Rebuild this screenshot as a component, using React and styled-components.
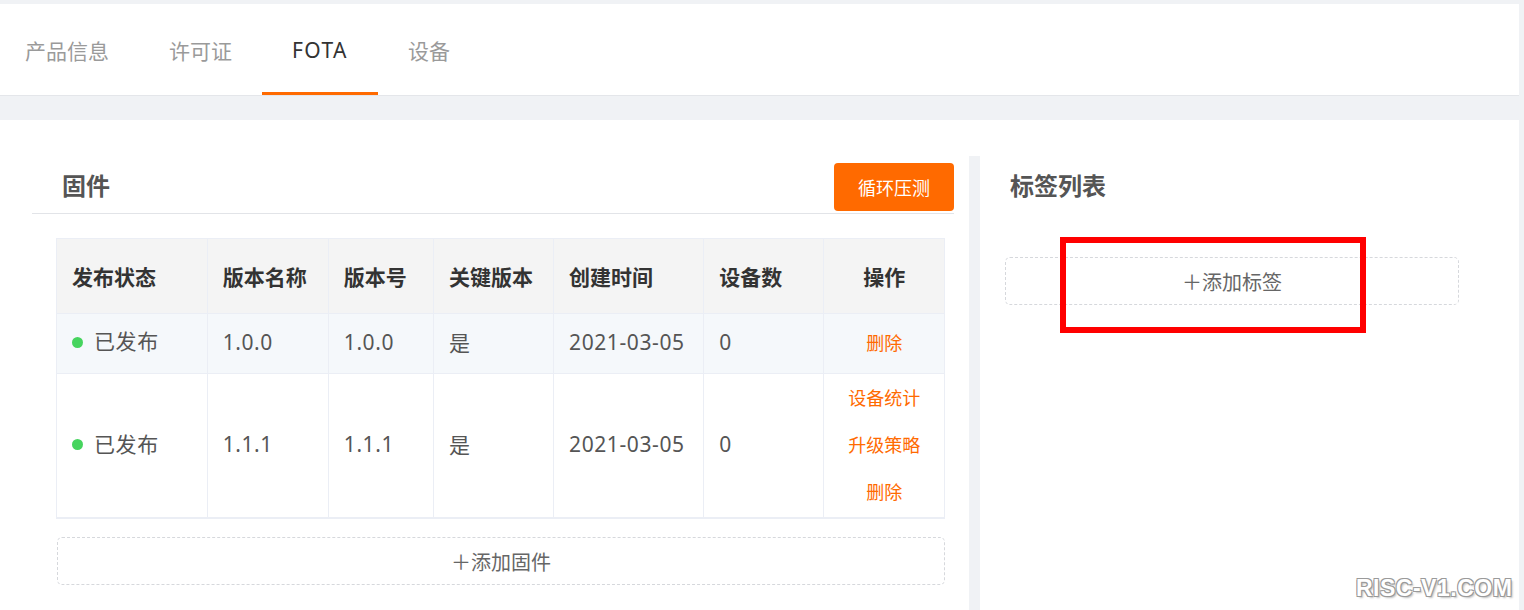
import styled, { createGlobalStyle } from "styled-components";

const GlobalStyle = createGlobalStyle`
  html, body {
    margin: 0;
    padding: 0;
    background: #f0f2f5;
    font-family: "Noto Sans", "Noto Sans CJK SC", sans-serif;
  }
  * { box-sizing: border-box; }
`;

const ORANGE = "#ff6a00";
const LINE = "#ebeef5";

const Page = styled.div`
  position: relative;
  width: 1519px;
  height: 610px;
  padding-top: 4px;
  overflow: hidden;
`;

const TabBar = styled.div`
  display: flex;
  height: 92px;
  background: #fff;
  border-bottom: 1px solid #e4e6ea;
  margin-bottom: 24px;
`;

const Tab = styled.div`
  position: relative;
  display: flex;
  align-items: center;
  padding: 0 30px;
  font-size: 21px;
  letter-spacing: ${(p) => (p.$latin ? "1.4px" : "0")};
  color: ${(p) => (p.$active ? "#333" : "#9a9a9a")};
  &:first-child { padding-left: 25px; }
  &::after {
    content: "";
    display: ${(p) => (p.$active ? "block" : "none")};
    position: absolute;
    left: 0;
    right: 0;
    bottom: 0;
    height: 3px;
    background: ${ORANGE};
  }
`;

const Content = styled.div`
  background: #fff;
  padding-top: 36px;
  height: 490px;
`;

const Columns = styled.div`
  display: flex;
  height: 100%;
`;

const FirmwarePanel = styled.section`
  width: 969px;
  flex-shrink: 0;
`;

const TagPanel = styled.section`
  position: relative;
  flex: 1;
  border-left: 11px solid #f0f2f5;
`;

const PanelHeader = styled.div`
  display: flex;
  align-items: center;
  justify-content: space-between;
  height: 58px;
  padding: 7px 0 2px 30px;
  margin: ${(p) => (p.$line ? "0 15px 0 32px" : "0")};
  border-bottom: ${(p) => (p.$line ? "1px solid #e2e4e8" : "none")};
`;

const Title = styled.h2`
  margin: -6px 0 0;
  font-size: 24px;
  font-weight: 700;
  color: #555;
`;

const PrimaryButton = styled.button`
  width: 120px;
  height: 48px;
  border: none;
  border-radius: 4px;
  background: ${ORANGE};
  color: #fff;
  font-family: inherit;
  font-size: 18px;
`;

const TableWrap = styled.div`
  margin: 24px 24px 0 56px;
  border: 1px solid ${LINE};
  border-bottom-width: 2px;
`;

const Table = styled.table`
  width: 100%;
  border-collapse: collapse;
  table-layout: fixed;
`;

const Th = styled.th`
  height: 74px;
  padding: 0 15px;
  background: #f4f4f4;
  border-right: 1px solid ${LINE};
  font-size: 21px;
  font-weight: 700;
  color: #333;
  text-align: ${(p) => (p.$center ? "center" : "left")};
  &:last-child { border-right: none; }
`;

const Row = styled.tr`
  background: ${(p) => (p.$highlight ? "#f5f8fb" : "#fff")};
  border-top: 1px solid ${LINE};
`;

const Td = styled.td`
  height: ${(p) => p.$h}px;
  padding: ${(p) => (p.$center ? "1px 0" : "0 15px 2px")};
  border-right: 1px solid ${LINE};
  font-size: 21px;
  letter-spacing: 0.6px;
  color: #555;
  text-align: ${(p) => (p.$center ? "center" : "left")};
  white-space: nowrap;
  &:last-child { border-right: none; }
`;

const Status = styled.span`
  display: flex;
  align-items: center;
  gap: 11px;
  line-height: 1.2;
  &::before {
    content: "";
    width: 11px;
    height: 11px;
    border-radius: 50%;
    background: #46d45e;
  }
`;

const ActionLink = styled.a`
  display: block;
  line-height: 47px;
  font-size: 18px;
  letter-spacing: 0;
  color: ${ORANGE};
  cursor: pointer;
`;

const DashedAdd = styled.div`
  display: flex;
  align-items: center;
  justify-content: center;
  height: 48px;
  margin: ${(p) => p.$margin};
  width: ${(p) => p.$width || "auto"};
  border: 1px dashed #d6d8dc;
  border-radius: 5px;
  font-size: 20px;
  color: #666;
`;

const Annotation = styled.div`
  position: absolute;
  left: 80px;
  top: 81px;
  width: 306px;
  height: 96px;
  border: 6px solid #ff0000;
  pointer-events: none;
`;

const Watermark = styled.div`
  position: absolute;
  left: 1356px;
  top: 575px;
  font-family: "Liberation Sans", Arial, sans-serif;
  font-size: 23px;
  font-weight: 700;
  color: #fff;
  letter-spacing: 0.5px;
  text-shadow: -1px -1px 0 #9a9a9a, 1px -1px 0 #9a9a9a, -1px 1px 0 #9a9a9a,
    1px 1px 0 #9a9a9a, 2px 2px 2px rgba(0, 0, 0, 0.25);
`;

const columns = [
  { label: "发布状态", width: 150 },
  { label: "版本名称", width: 121 },
  { label: "版本号", width: 105 },
  { label: "关键版本", width: 120 },
  { label: "创建时间", width: 150 },
  { label: "设备数", width: 120 },
  { label: "操作", width: 120, center: true },
];

const firmware = [
  { name: "1.0.0", version: "1.0.0", key: "是", created: "2021-03-05", devices: 0, actions: ["删除"], h: 60, highlight: true },
  { name: "1.1.1", version: "1.1.1", key: "是", created: "2021-03-05", devices: 0, actions: ["设备统计", "升级策略", "删除"], h: 144 },
];

export default function App() {
  return (
    <>
      <GlobalStyle />
      <Page>
        <TabBar>
          <Tab>产品信息</Tab>
          <Tab>许可证</Tab>
          <Tab $active $latin>FOTA</Tab>
          <Tab>设备</Tab>
        </TabBar>
        <Content>
          <Columns>
            <FirmwarePanel>
              <PanelHeader $line>
                <Title>固件</Title>
                <PrimaryButton>循环压测</PrimaryButton>
              </PanelHeader>
              <TableWrap>
                <Table>
                  <colgroup>
                    {columns.map((c) => (
                      <col key={c.label} style={{ width: c.width }} />
                    ))}
                  </colgroup>
                  <thead>
                    <tr>
                      {columns.map((c) => (
                        <Th key={c.label} $center={c.center}>{c.label}</Th>
                      ))}
                    </tr>
                  </thead>
                  <tbody>
                    {firmware.map((f) => (
                      <Row key={f.name} $highlight={f.highlight}>
                        <Td $h={f.h}><Status>已发布</Status></Td>
                        <Td $h={f.h}>{f.name}</Td>
                        <Td $h={f.h}>{f.version}</Td>
                        <Td $h={f.h}>{f.key}</Td>
                        <Td $h={f.h}>{f.created}</Td>
                        <Td $h={f.h}>{f.devices}</Td>
                        <Td $h={f.h} $center>
                          {f.actions.map((a) => (
                            <ActionLink key={a}>{a}</ActionLink>
                          ))}
                        </Td>
                      </Row>
                    ))}
                  </tbody>
                </Table>
              </TableWrap>
              <DashedAdd $margin="18px 24px 0 57px">＋添加固件</DashedAdd>
            </FirmwarePanel>
            <TagPanel>
              <PanelHeader>
                <Title>标签列表</Title>
              </PanelHeader>
              <DashedAdd $margin="43px 0 0 25px" $width="454px">＋添加标签</DashedAdd>
              <Annotation />
            </TagPanel>
          </Columns>
        </Content>
        <Watermark>RISC-V1.COM</Watermark>
      </Page>
    </>
  );
}
